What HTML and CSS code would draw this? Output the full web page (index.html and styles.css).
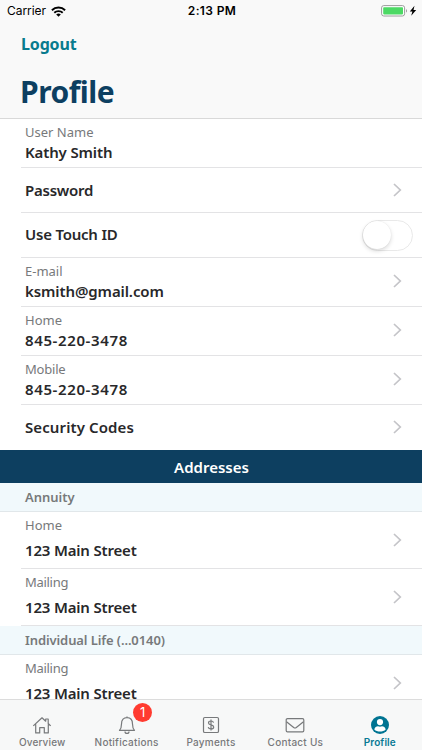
FILE: index.html
```html
<!DOCTYPE html>
<html lang="en">
<head>
<meta charset="utf-8">
<title>Profile</title>
<link rel="stylesheet" href="styles.css">
</head>
<body>
<div class="screen">
  <header class="top">
    <div class="status">
      <div class="status-left"><span class="carrier">Carrier</span>
        <svg class="wifi" width="15" height="11" viewBox="0 0 15 11"><g fill="none" stroke="#000" stroke-width="1.9"><path d="M.9 4.2a9.4 9.4 0 0 1 13.2 0"/><path d="M3.3 6.8a6 6 0 0 1 8.4 0"/></g><path d="M5.2 8.5a3.3 3.3 0 0 1 4.6 0L7.5 10.8z"/></svg>
      </div>
      <div class="time">2:13 PM</div>
      <svg class="battery" width="37" height="12" viewBox="0 0 37 12"><rect x="1.6" y=".6" width="23" height="10.4" rx="2.2" fill="#fff" stroke="#9b9b9b"/><rect x="3.2" y="2.2" width="19.8" height="7.2" rx=".8" fill="#4cd964"/><path d="M26 4c1.300.4 1.300 3.200 0 3.600z" fill="#9b9b9b"/><path d="M34.500.8 29.800 6.600h2.600l-1.200 4.100 5-5.800h-2.700z"/></svg>
    </div>
    <a class="logout">Logout</a>
    <h1 class="title">Profile</h1>
  </header>
  <main class="list">
    <div class="row tall"><div class="label">User Name</div><div class="value kathy">Kathy Smith</div></div>
    <div class="row"><div class="value password">Password</div><svg class="chev" viewBox="0 0 9 14"><path d="m1 1 6.3 6L1 13"/></svg></div>
    <div class="row"><div class="value touch">Use Touch ID</div><div class="switch"><div class="knob"></div></div></div>
    <div class="row tall"><div class="label">E-mail</div><div class="value address">ksmith@gmail.com</div><svg class="chev" viewBox="0 0 9 14"><path d="m1 1 6.3 6L1 13"/></svg></div>
    <div class="row tall"><div class="label">Home</div><div class="value phone">845-220-3478</div><svg class="chev" viewBox="0 0 9 14"><path d="m1 1 6.3 6L1 13"/></svg></div>
    <div class="row tall"><div class="label mobile">Mobile</div><div class="value phone">845-220-3478</div><svg class="chev" viewBox="0 0 9 14"><path d="m1 1 6.3 6L1 13"/></svg></div>
    <div class="row last"><div class="value codes">Security Codes</div><svg class="chev" viewBox="0 0 9 14"><path d="m1 1 6.3 6L1 13"/></svg></div>
    <h2 class="banner">Addresses</h2>
    <h3 class="section">Annuity</h3>
    <div class="row place"><div class="label">Home</div><div class="value street">123 Main Street</div><svg class="chev" viewBox="0 0 9 14"><path d="m1 1 6.3 6L1 13"/></svg></div>
    <div class="row place"><div class="label mailing">Mailing</div><div class="value street">123 Main Street</div><svg class="chev" viewBox="0 0 9 14"><path d="m1 1 6.3 6L1 13"/></svg></div>
    <h3 class="section life">Individual Life (...0140)</h3>
    <div class="row place"><div class="label mailing">Mailing</div><div class="value street">123 Main Street</div><svg class="chev" viewBox="0 0 9 14"><path d="m1 1 6.3 6L1 13"/></svg></div>
  </main>
  <nav class="tabs">
    <div class="tab"><svg class="icon" viewBox="0 0 20 20"><path d="M1.300 10.900 10 2.800l3.700 3.400V4h2.500v4.500l2.500 2.400M3.700 9.200v8.700h4v-5.200h4.600v5.200h4V9.200"/></svg><span class="overview">Overview</span></div>
    <div class="tab"><svg class="icon" viewBox="0 0 20 20"><path d="M10 2.500V1.500M2.500 15.400c1.500-1.700 2-2.400 2-6.500 0-4.200 2.200-6.300 5.500-6.300s5.500 2.100 5.500 6.300c0 4.100.5 4.800 2 6.500zM8 16.400c0 2.700 4 2.700 4 0"/></svg><span class="notifications">Notifications</span><b class="badge">1</b></div>
    <div class="tab"><svg class="icon" viewBox="0 0 20 20"><rect x="2.500" y="2.500" width="15" height="15" rx="1.300"/><path d="M12.600 7.600c-.4-1.200-1.300-1.600-2.600-1.600-1.600 0-2.500.7-2.500 1.900 0 2.800 5.200 1.300 5.200 4.100 0 1.300-1 2-2.700 2-1.500 0-2.500-.6-2.800-1.900M10 4.500v11"/></svg><span class="payments">Payments</span></div>
    <div class="tab"><svg class="icon" viewBox="0 0 20 20"><rect x="1.200" y="3.600" width="17.600" height="13.200" rx="1.300"/><path d="m1.500 6.700 7.200 5.800q1.300 1 2.600 0l7.200-5.800"/></svg><span class="contact">Contact Us</span></div>
    <div class="tab active"><svg class="icon solid" viewBox="0 0 20 20"><circle cx="10" cy="10" r="9" fill="#007492"/><circle cx="10" cy="7.100" r="3.100" fill="#fff"/><path d="M4.300 14.500c.5-2.300 2-3.300 3.700-3.300q2 .9 4 0c1.700 0 3.200 1 3.700 3.300-2.800 2.700-8.600 2.700-11.400 0z" fill="#fff"/></svg><span class="profile">Profile</span></div>
  </nav>
</div>
</body>
</html>
```
FILE: styles.css
```css
* { box-sizing: border-box; }
body { margin: 0; background: #fff; font-family: "Noto Sans", sans-serif; }
.screen { width: 422px; height: 750px; overflow: hidden; display: flex; flex-direction: column; }
h1, h2, h3 { margin: 0; font-weight: 600; }
.top { flex: 0 0 119px; background: #f9f9f9; border-bottom: 1px solid #d9d9d9; }
.status { display: grid; grid-template-columns: 1fr auto 1fr; align-items: center; height: 22px; padding: 0 5px 0 7px; font-family: Inter, sans-serif; font-size: 12px; line-height: 22px; }
.status-left { display: flex; align-items: center; gap: 5px; }
.carrier { letter-spacing: -.05px; }
.time { font-weight: 600; letter-spacing: .35px; }
.battery { justify-self: end; }
.logout { display: block; margin: 10px 0 0 21px; height: 24px; font-size: 16px; line-height: 24px; letter-spacing: -.15px; font-weight: 700; color: #087b8e; }
.title { margin: 16px 0 0 20px; height: 40px; font-size: 30px; line-height: 39px; letter-spacing: -.5px; font-weight: 700; color: #0d3f61; }
.list { flex: 1 1 0; min-height: 0; overflow: hidden; }
.row { position: relative; display: flex; flex-direction: column; justify-content: center; height: 45px; margin-left: 21px; padding-left: 4px; border-bottom: 1px solid #e3e3e5; }
.row.tall { height: 49px; justify-content: flex-start; padding-top: 3px; }
.row.last { padding-bottom: 1px; border-bottom: 0; }
.row.place { height: 57px; justify-content: flex-start; padding-top: 3px; }
.label { font-size: 13px; line-height: 20px; color: #77797b; white-space: nowrap; }
.value { font-size: 15px; line-height: 20px; font-weight: 600; color: #28282a; white-space: nowrap; }
.place .value { margin-top: 5px; }
.kathy { letter-spacing: -.13px; }
.password { letter-spacing: -.25px; }
.touch { position: relative; top: -1px; letter-spacing: -.22px; }
.address { letter-spacing: -.1px; }
.phone { letter-spacing: .62px; }
.codes { letter-spacing: .1px; }
.street { letter-spacing: -.18px; }
.mobile { letter-spacing: -.2px; }
.mailing { letter-spacing: -.3px; }
.life { letter-spacing: -.1px; }
.chev { position: absolute; right: 20px; top: calc(50% - 7px); width: 9px; height: 14px; fill: none; stroke: #c4c4c8; stroke-width: 1.7; }
.tall .chev, .last .chev { top: calc(50% - 8px); }
.switch { position: absolute; right: 9px; top: 7px; width: 51px; height: 31px; border: 1.5px solid #e9e9e9; border-radius: 16px; background: #fff; }
.knob { width: 28px; height: 28px; border-radius: 50%; background: #fff; box-shadow: 0 2px 4px rgba(0,0,0,.15), 0 0 1px rgba(0,0,0,.1); }
.banner { height: 33px; padding-left: 1px; background: #0d3f60; color: #fff; text-align: center; font-size: 15px; line-height: 34px; }
.section { height: 29px; padding-left: 25px; border-bottom: 1px solid #e1e7ea; background: #f1f9fc; color: #77797b; font-size: 13px; line-height: 29px; }
.tabs { flex: 0 0 51px; display: grid; grid-template-columns: repeat(5, 1fr); border-top: 1px solid #dcdcdc; background: #f7f8f8; }
.tab { position: relative; display: flex; flex-direction: column; align-items: center; padding-top: 15px; font-family: Inter, sans-serif; font-size: 10px; line-height: 14px; letter-spacing: .25px; color: #77797b; font-weight: 500; white-space: nowrap; }
.overview { letter-spacing: .15px; }
.icon { width: 20px; height: 20px; fill: none; stroke: #77797b; stroke-width: 1.2; stroke-linejoin: round; }
.icon.solid { stroke: none; }
.active { color: #087994; font-weight: 600; letter-spacing: .1px; }
.badge { position: absolute; left: 49px; top: 3px; width: 19px; height: 19px; border-radius: 50%; background: #ff3b30; color: #fff; font-size: 13px; line-height: 19px; font-weight: 400; text-align: center; }
```
